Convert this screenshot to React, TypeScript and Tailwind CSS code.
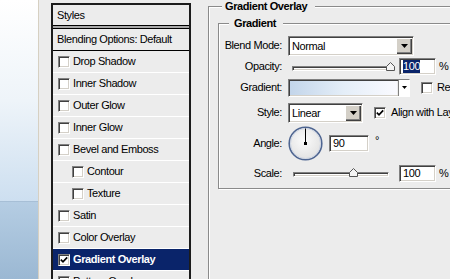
import React from "react";

const sunken =
  "border border-t-[#808080] border-l-[#808080] border-b-white border-r-white shadow-[inset_1px_1px_0_#404040,inset_-1px_-1px_0_#d4d0c8]";

const etched =
  "border border-[#8a8a8a] shadow-[inset_1px_1px_0_#fff,1px_1px_0_#fff]";

const Check = ({ checked = false }: { checked?: boolean }) => (
  <span className={`w-[12px] h-[12px] shrink-0 bg-white flex items-center justify-center ${sunken}`}>
    {checked && (
      <svg width="8" height="8" viewBox="0 0 8 8">
        <path d="M0.8 3.6 L3 5.8 L7.2 1.4" stroke="#000" strokeWidth="1.7" fill="none" />
      </svg>
    )}
  </span>
);

const Arrow = ({ small = false }: { small?: boolean }) =>
  small ? (
    <svg width="5" height="3" viewBox="0 0 5 3">
      <polygon points="0,0 5,0 2.5,3" fill="#000" />
    </svg>
  ) : (
    <svg width="7" height="4" viewBox="0 0 7 4">
      <polygon points="0,0 7,0 3.5,4" fill="#000" />
    </svg>
  );

const Select = ({ value, width }: { value: string; width: string }) => (
  <div className={`${width} h-[20px] bg-white flex items-stretch ${sunken}`}>
    <span className="flex-1 pl-[3px] pt-[1px] flex items-center">{value}</span>
    <span className="w-[16px] m-[1px] bg-[#d4d0c8] flex items-center justify-center shadow-[inset_1px_1px_0_#fff,inset_-1px_-1px_0_#404040,inset_-2px_-2px_0_#808080]">
      <Arrow />
    </span>
  </div>
);

const Slider = ({ width, pos }: { width: string; pos: number }) => (
  <div className={`relative ${width} h-[5px] bg-white mt-[3px] ${sunken}`}>
    <svg
      className="absolute -top-[5px]"
      style={{ left: pos - 5 }}
      width="9"
      height="9"
      viewBox="0 0 9 9"
    >
      <polygon points="0.5,8.5 0.5,4.5 4.5,0.5 8.5,4.5 8.5,8.5" fill="#f4f4f4" stroke="#555" />
    </svg>
  </div>
);

const Field = ({ children, width }: { children: React.ReactNode; width: string }) => (
  <div className={`${width} h-[17px] bg-white pl-[3px] flex items-center ${sunken}`}>{children}</div>
);

const layers: { name: string; indent?: boolean; checked?: boolean }[] = [
  { name: "Drop Shadow" },
  { name: "Inner Shadow" },
  { name: "Outer Glow" },
  { name: "Inner Glow" },
  { name: "Bevel and Emboss" },
  { name: "Contour", indent: true },
  { name: "Texture", indent: true },
  { name: "Satin" },
  { name: "Color Overlay" },
  { name: "Gradient Overlay", checked: true },
  { name: "Pattern Overlay" },
];

export default function App() {
  return (
    <div className="w-[450px] h-[279px] overflow-hidden flex bg-[#ececec] text-black text-[11px] leading-[13px] tracking-[-0.4px] font-['Liberation_Sans',Tahoma,sans-serif]">
      {/* desktop strip */}
      <div className="w-[38px] shrink-0 flex flex-col">
        <div className="h-[201px] bg-gradient-to-b from-white via-[#eef4f9] to-[#cddff0]" />
        <div className="h-px bg-[#a7bfd6]" />
        <div className="flex-1 bg-gradient-to-b from-[#b5cde3] to-[#9bb8d3]" />
      </div>
      <div className="w-px shrink-0 bg-[#d6d0c2]" />

      {/* styles list */}
      <div className="pl-[12px] pt-[3px] shrink-0">
        <div className="w-[140px] border-2 border-[#1c1c1c] bg-[#ececec]">
          <div className="h-[20px] pl-[4px] flex items-center">Styles</div>
          <div className="h-[4px] border-y border-black bg-[#a8a8a8]" />
          <div className="h-[22px] pl-[4px] flex items-center border-b border-black">
            Blending Options: Default
          </div>
          {layers.map((l) => (
            <div
              key={l.name}
              className={`h-[22px] flex items-center gap-[3px] border-b border-white whitespace-nowrap ${
                l.indent ? "pl-[19px]" : "pl-[5px]"
              } ${l.checked ? "bg-[#0a246a] text-white font-bold" : ""}`}
            >
              <Check checked={l.checked} />
              <span>{l.name}</span>
            </div>
          ))}
        </div>
      </div>

      {/* options panel */}
      <fieldset className={`ml-[17px] shrink-0 w-[260px] h-[300px] ${etched}`}>
        <legend className="ml-[13px] pl-[3px] pr-[8px] bg-[#ececec] font-bold">Gradient Overlay</legend>
        <fieldset className={`ml-[9px] mt-[4px] w-[250px] ${etched}`}>
          <legend className="ml-[10px] pl-[5px] pr-[7px] bg-[#ececec] font-bold">Gradient</legend>
          <div className="pt-[4px] pb-[2px] whitespace-nowrap">
            <div className="h-[23px] flex items-center">
              <span className="w-[63px] text-right">Blend Mode:</span>
              <div className="ml-[6px]">
                <Select value="Normal" width="w-[126px]" />
              </div>
            </div>

            <div className="h-[19px] flex items-center">
              <span className="w-[63px] text-right">Opacity:</span>
              <div className="ml-[10px]">
                <Slider width="w-[103px]" pos={98} />
              </div>
              <div className="ml-[4px]">
                <Field width="w-[37px]">
                  <span className="bg-[#0a246a] text-white">100</span>
                </Field>
              </div>
              <span className="ml-[3px]">%</span>
            </div>

            <div className="h-[23px] flex items-center">
              <span className="w-[63px] text-right">Gradient:</span>
              <div className={`ml-[6px] w-[122px] h-[18px] flex ${sunken}`}>
                <div className="flex-1 m-[1px] bg-gradient-to-r from-[#c3d5ea] via-[#e4eef8] via-50% to-[#fafaff]" />
                <div className="w-[11px] border-l border-[#808080] bg-white flex items-center justify-center">
                  <Arrow small />
                </div>
              </div>
              <div className="ml-[11px]">
                <Check />
              </div>
              <span className="ml-[4px]">Reverse</span>
            </div>

            <div className="h-[27px] flex items-center">
              <span className="w-[63px] text-right">Style:</span>
              <div className="ml-[6px]">
                <Select value="Linear" width="w-[75px]" />
              </div>
              <div className="ml-[11px]">
                <Check checked />
              </div>
              <span className="ml-[5px]">Align with Layer</span>
            </div>

            <div className="h-[34px] flex items-center">
              <span className="w-[63px] text-right">Angle:</span>
              <svg className="ml-[6px]" width="35" height="35" viewBox="0 0 35 35">
                <defs>
                  <radialGradient id="dial" cx="0.45" cy="0.4" r="0.6">
                    <stop offset="0" stopColor="#fbfbfb" />
                    <stop offset="1" stopColor="#e2e2e2" />
                  </radialGradient>
                </defs>
                <circle cx="17.5" cy="17.5" r="16.3" fill="url(#dial)" stroke="#4e6591" strokeWidth="1.6" />
                <circle cx="17.5" cy="17.5" r="15" fill="none" stroke="#c9d2e2" strokeWidth="0.8" />
                <line x1="17.5" y1="17.5" x2="17.5" y2="2.5" stroke="#000" strokeWidth="1" />
                <rect x="16" y="16" width="3" height="3" fill="#000" />
              </svg>
              <div className="ml-[6px]">
                <Field width="w-[40px]">90</Field>
              </div>
              <span className="ml-[6px] -mt-[6px]">°</span>
            </div>

            <div className="h-[26px] flex items-center">
              <span className="w-[63px] text-right">Scale:</span>
              <div className="ml-[11px]">
                <Slider width="w-[96px]" pos={60} />
              </div>
              <div className="ml-[10px]">
                <Field width="w-[37px]">100</Field>
              </div>
              <span className="ml-[3px]">%</span>
            </div>
          </div>
        </fieldset>
      </fieldset>
    </div>
  );
}
